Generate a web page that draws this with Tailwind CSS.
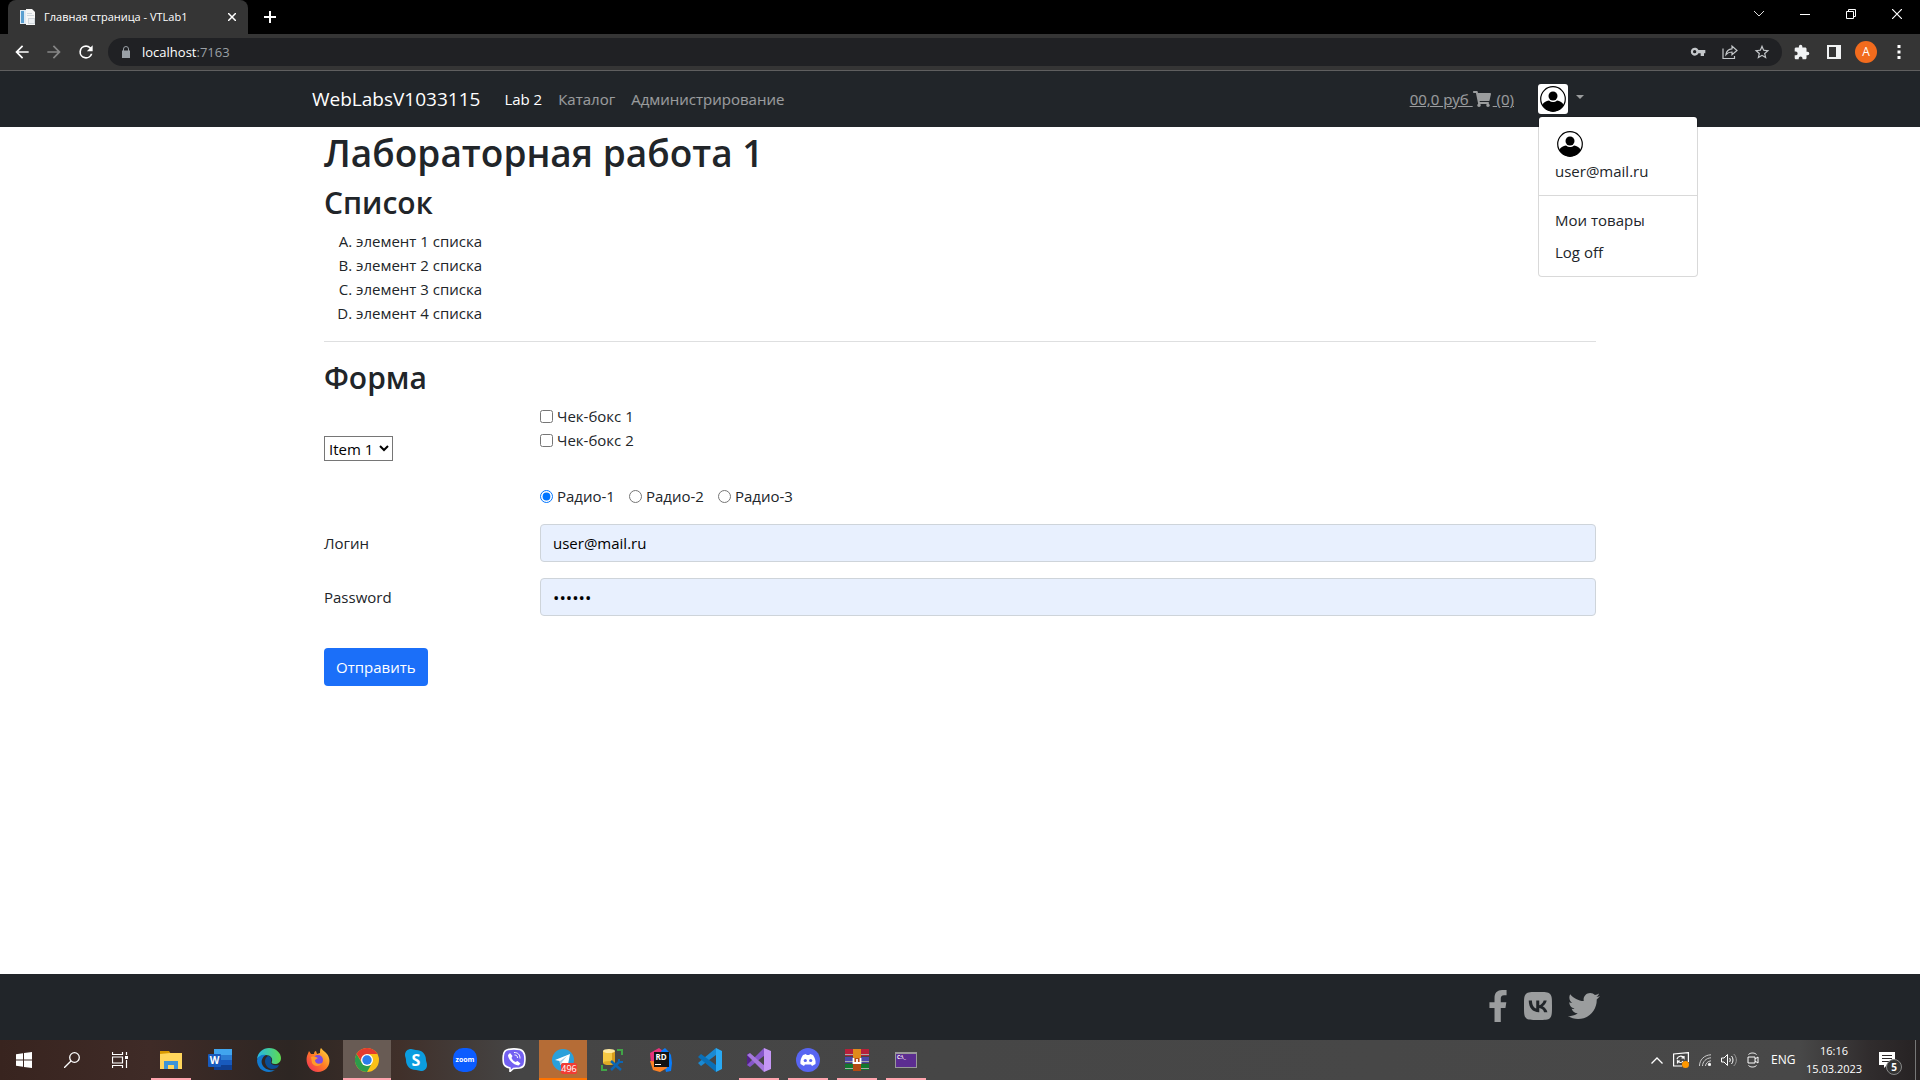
<!DOCTYPE html>
<html lang="ru">
<head>
<meta charset="utf-8">
<title>Главная страница - VTLab1</title>
<script src="https://cdn.jsdelivr.net/npm/@tailwindcss/browser@4"></script>
</head>
<body class="min-h-screen flex flex-col bg-white text-[#212529] font-['Open_Sans','Noto_Sans',sans-serif] text-[15px] leading-6">

<!-- Browser window -->
<header class="text-white">
  <div class="h-[34px] bg-black flex items-stretch">
    <div class="ml-2 w-60 bg-[#353535] rounded-t-lg flex items-center pl-3 pr-2 text-[11px]">
      <svg class="size-4 shrink-0" viewBox="0 0 16 16"><path fill="#dfe9f2" d="M0 1h10v14H0z"/><path fill="#5a9fd0" d="M1 2h3v12H1z"/><path fill="#f6f6f6" d="M6 0h6l3 3v13H6z"/><path fill="#cfd6dc" d="M7 4h5v1H7zM7 6h7v1H7zM8 9h7v6H8z"/><path fill="#eceff2" d="M9 10h5v4H9z"/></svg>
      <span class="ml-2 grow whitespace-nowrap">Главная страница - VTLab1</span>
      <button aria-label="Закрыть вкладку" class="size-4 flex items-center justify-center"><svg class="size-2" viewBox="0 0 8 8" stroke="#fff" stroke-width="1.5"><path d="M0 0l8 8M8 0L0 8"/></svg></button>
    </div>
    <button aria-label="Новая вкладка" class="ml-2 w-7 flex items-center justify-center"><svg class="size-3" viewBox="0 0 12 12" stroke="#fff" stroke-width="2"><path d="M6 0v12M0 6h12"/></svg></button>
    <div class="ml-auto flex h-7">
      <button aria-label="Поиск вкладок" class="w-[46px] flex items-center justify-center"><svg class="w-3 h-2" viewBox="0 0 12 8" fill="none" stroke="#ddd"><path d="M1 1l5 5 5-5"/></svg></button>
      <button aria-label="Свернуть" class="w-[46px] flex items-center justify-center"><svg class="size-[10px]" viewBox="0 0 10 10" stroke="#fff"><path d="M0 5.5h10"/></svg></button>
      <button aria-label="Восстановить" class="w-[46px] flex items-center justify-center"><svg class="size-[10px]" viewBox="0 0 10 10" fill="none" stroke="#fff"><path d="M.5 2.5h7v7h-7zM2.5 2V.5h7v7H8"/></svg></button>
      <button aria-label="Закрыть" class="w-[46px] flex items-center justify-center"><svg class="size-[10px]" viewBox="0 0 10 10" stroke="#fff" stroke-width="1.2"><path d="M0 0l10 10M10 0L0 10"/></svg></button>
    </div>
  </div>
  <div class="h-[37px] bg-[#353535] border-b border-[#5f5f5f] flex items-center pl-3 pr-[11px] gap-3">
    <button aria-label="Назад"><svg class="size-5" viewBox="0 0 24 24" fill="#fff"><path d="M20 11H7.83l5.59-5.59L12 4l-8 8 8 8 1.41-1.41L7.83 13H20z"/></svg></button>
    <button aria-label="Вперёд"><svg class="size-5" viewBox="0 0 24 24" fill="#868686"><path d="M4 11h12.17l-5.59-5.59L12 4l8 8-8 8-1.41-1.41L16.17 13H4z"/></svg></button>
    <button aria-label="Обновить"><svg class="size-5" viewBox="0 0 24 24" fill="#fff"><path d="M17.65 6.35A7.96 7.96 0 0 0 12 4a8 8 0 1 0 7.73 10h-2.08A6 6 0 1 1 12 6c1.66 0 3.14.69 4.22 1.78L13 11h7V4z"/></svg></button>
    <div class="grow h-7 rounded-full bg-[#202124] flex items-center pl-3 pr-2.5 text-[13px]">
      <svg class="size-3 shrink-0" viewBox="0 0 12 12" fill="#9aa0a6"><path d="M2 4.500h8V12H2z"/><path d="M3.500 5V3a2.500 2.500 0 0 1 5 0v2" fill="none" stroke="#9aa0a6"/></svg>
      <span class="ml-2.5">localhost<span class="text-[#9aa0a6]">:7163</span></span>
      <div class="ml-auto flex items-center gap-3">
        <button aria-label="Пароли" class="size-5 flex items-center justify-center"><svg class="size-4" viewBox="0 0 24 24" fill="#c4c7ca"><path d="M12.650 9A6 6 0 1 0 12.650 14H16v4h5v-4h2V9zM7 14a2.500 2.500 0 1 1 0-5 2.500 2.500 0 0 1 0 5z"/></svg></button>
        <button aria-label="Поделиться" class="size-5 flex items-center justify-center"><svg class="size-4" viewBox="0 0 16 16" fill="none" stroke="#c4c7ca" stroke-width="1.200"><path d="M1 4.500V14.500H12.500V12M4 10.500C4.500 7 6.500 5 10 4.800V2l5 4.500-5 4.300V8C7.500 8 5.500 8.800 4 10.500z"/></svg></button>
        <button aria-label="Добавить закладку" class="size-5 flex items-center justify-center"><svg class="size-4" viewBox="0 0 24 24" fill="#c4c7ca"><path d="M23 9.240l-7.910-.68L12 1.300 8.910 8.570 1 9.240l6 5.200-1.800 7.730L12 18.070l6.800 4.100L17 14.440zM12 16.050l-4.140 2.500 1.100-4.710-3.650-3.160 4.820-.42L12 5.820l1.880 4.450 4.820.42-3.650 3.160 1.100 4.710z"/></svg></button>
      </div>
    </div>
    <button aria-label="Расширения"><svg class="size-4" viewBox="1 0 23 23" fill="#f1f3f4"><path d="M20.500 11H19V7c0-1.100-.9-2-2-2h-4V3.500a2.500 2.500 0 0 0-5 0V5H4c-1.100 0-2 .9-2 2v3.800h1.500a2.700 2.700 0 0 1 0 5.400H2V20c0 1.100.9 2 2 2h3.800v-1.500a2.700 2.700 0 0 1 5.400 0V22H17c1.100 0 2-.9 2-2v-4h1.500a2.500 2.500 0 0 0 0-5z"/></svg></button>
    <button aria-label="Боковая панель" class="px-px ml-1"><svg class="size-[14px]" viewBox="0 0 14 14"><path fill="#f1f3f4" fill-rule="evenodd" d="M0 0h14v14H0zM2 2v10h7V2z"/></svg></button>
    <button aria-label="Профиль" class="size-[22px] ml-px rounded-full bg-[#f26b1d] text-xs flex items-center justify-center">A</button>
    <button aria-label="Меню" class="w-5 flex justify-center"><svg class="w-1 h-[14px]" viewBox="0 0 4 14" fill="#fff"><path d="M.5 0h3v3h-3zM.5 5.500h3v3h-3zM.5 11h3v3h-3z"/></svg></button>
  </div>
</header>

<!-- Site navigation -->
<nav class="bg-[#212529] h-14">
  <div class="max-w-[1320px] mx-auto px-3 h-full flex items-center text-white/55">
    <a href="#" class="text-white text-[19px] mr-6">WebLabsV1033115</a>
    <div class="flex gap-4">
      <a href="#" class="text-white">Lab 2</a>
      <a href="#">Каталог</a>
      <a href="#">Администрирование</a>
    </div>
    <a href="#" class="ml-auto underline">00,0 руб <svg class="inline w-[18px] h-4 mr-0.5 align-[-2px]" viewBox="0 0 576 512" fill="#9b9d9e"><path d="M528.120 301.319l47.273-208C578.806 78.301 567.391 64 551.990 64H159.208l-9.166-44.810C147.758 8.021 137.930 0 126.529 0H24C10.745 0 0 10.745 0 24v16c0 13.255 10.745 24 24 24h69.883l70.248 343.435C147.325 417.100 136 435.222 136 456c0 30.928 25.072 56 56 56s56-25.072 56-56c0-15.674-6.447-29.835-16.824-40h209.647C430.447 426.165 424 440.326 424 456c0 30.928 25.072 56 56 56s56-25.072 56-56c0-22.172-12.888-41.332-31.579-50.405l5.517-24.276c3.413-15.018-8.002-29.319-23.403-29.319H218.117l-6.545-32h293.145c11.206 0 20.920-7.754 23.403-18.681z"/></svg> (0)</a>
    <div class="relative ml-6 mr-6">
      <button aria-label="Меню пользователя" class="flex items-center gap-2">
        <svg class="size-[30px] rounded-[3px] bg-white" viewBox="0 0 30 30"><clipPath id="ring"><circle cx="15" cy="15" r="12.500"/></clipPath><circle cx="15" cy="15" r="12.300" fill="none" stroke="#000" stroke-width="1.200"/><g clip-path="url(#ring)"><path d="M4 28c-2-9 4-11 7-11.500 2.500 2 5.500 2 8 0 3 .5 9 2.500 7 11.500z"/></g><circle cx="15" cy="12" r="4.500"/></svg>
        <svg class="w-2 h-1 -translate-y-0.5" viewBox="0 0 8 4" fill="#9b9d9e"><path d="M0 0h8L4 4z"/></svg>
      </button>
      <div class="absolute left-0 top-8 z-10 w-40 bg-white border border-black/15 bg-clip-padding rounded py-2 text-[#212529]">
        <div class="px-4 py-1">
          <svg class="size-[30px]" viewBox="0 0 30 30"><circle cx="15" cy="15" r="12.300" fill="none" stroke="#000" stroke-width="1.200"/><g clip-path="url(#ring)"><path d="M4 28c-2-9 4-11 7-11.500 2.500 2 5.500 2 8 0 3 .5 9 2.500 7 11.500z"/></g><circle cx="15" cy="12" r="4.500"/></svg>
          user@mail.ru
        </div>
        <hr class="my-2 border-black/15">
        <a href="#" class="block px-4 py-1">Мои товары</a>
        <a href="#" class="block px-4 py-1">Log off</a>
      </div>
    </div>
  </div>
</nav>

<main class="grow w-full max-w-[1320px] mx-auto px-6">
  <h1 class="text-[37px] leading-[52px] font-semibold mb-1">Лабораторная работа 1</h1>
  <h2 class="text-[30px] leading-10 font-semibold mb-1.5">Список</h2>
  <ol class="list-[upper-alpha] pl-8 mb-4">
    <li>элемент 1 списка</li>
    <li>элемент 2 списка</li>
    <li>элемент 3 списка</li>
    <li>элемент 4 списка</li>
  </ol>
  <hr class="border-[#dedfe0] mb-4">
  <h2 class="text-[30px] leading-10 font-semibold mb-1.5">Форма</h2>
  <form>
    <div class="flex h-20 items-start">
      <div class="w-[216px] shrink-0 pt-8"><select aria-label="Элемент" class="border border-[#767676] bg-white rounded-none h-[25px] w-[69px] text-black"><option>Item 1</option></select></div>
      <div>
        <label class="flex items-center gap-1"><input type="checkbox">Чек-бокс 1</label>
        <label class="flex items-center gap-1"><input type="checkbox">Чек-бокс 2</label>
      </div>
    </div>
    <div class="flex gap-[14px] ml-[216px] mb-4">
      <label class="flex items-center gap-1"><input type="radio" name="radio" checked>Радио-1</label>
      <label class="flex items-center gap-1"><input type="radio" name="radio">Радио-2</label>
      <label class="flex items-center gap-1"><input type="radio" name="radio">Радио-3</label>
    </div>
    <div class="flex items-center mb-4">
      <label for="login" class="w-[216px] shrink-0">Логин</label>
      <input id="login" type="text" value="user@mail.ru" class="grow h-[38px] px-3 border border-[#ced4da] rounded bg-[#e8f0fe] text-black">
    </div>
    <div class="flex items-center mb-8">
      <label for="password" class="w-[216px] shrink-0">Password</label>
      <input id="password" type="password" value="123456" class="grow h-[38px] px-3 border border-[#ced4da] rounded bg-[#e8f0fe] text-black text-[17px]">
    </div>
    <button type="button" class="h-[38px] px-3 rounded bg-[#1b6ff9] text-white">Отправить</button>
  </form>
</main>

<footer class="bg-[#212529] h-[66px]">
  <div class="max-w-[1320px] mx-auto px-5 h-16 flex items-center justify-end gap-4">
    <a href="#" aria-label="Facebook"><svg class="w-5 h-8" viewBox="0 0 320 512" fill="#9b9d9e"><path d="M279.140 288l14.220-92.660h-88.910v-60.130c0-25.350 12.420-50.060 52.240-50.060h40.420V0S260.430 0 225.360 0c-73.220 0-121.080 44.380-121.080 124.720v70.620H22.890V288h81.390v224h100.170V288z"/></svg></a>
    <a href="#" aria-label="VK"><svg class="w-7 h-8" viewBox="0 0 448 512" fill="#9b9d9e"><path fill-rule="evenodd" d="M31.490 63.490C0 94.980 0 145.670 0 247.040V264.960C0 366.330 0 417.020 31.490 448.510C62.980 480 113.670 480 215.040 480H232.960C334.330 480 385.020 480 416.510 448.510C448 417.020 448 366.330 448 264.960V247.040C448 145.670 448 94.980 416.510 63.490C385.020 32 334.330 32 232.960 32H215.040C113.670 32 62.980 32 31.490 63.490ZM75.600 168.270H126.750C128.430 253.760 166.130 289.970 196 297.440V168.270H244.160V242C273.650 238.830 304.640 205.230 315.090 168.270H363.250C359.310 187.440 351.460 205.580 340.190 221.580C328.910 237.570 314.460 251.070 297.730 261.230C316.410 270.500 332.910 283.630 346.130 299.750C359.360 315.870 369.010 334.620 374.450 354.750H321.440C316.560 337.260 306.610 321.610 292.870 309.750C279.120 297.900 262.170 290.370 244.160 288.110V354.750H238.370C136.270 354.750 78.030 284.750 75.600 168.270Z"/></svg></a>
    <a href="#" aria-label="Twitter"><svg class="size-8" viewBox="0 0 512 512" fill="#9b9d9e"><path d="M459.370 151.716c.325 4.548.325 9.097.325 13.645 0 138.720-105.583 298.558-298.558 298.558-59.452 0-114.680-17.219-161.137-47.106 8.447.974 16.568 1.299 25.340 1.299 49.055 0 94.213-16.568 130.274-44.832-46.132-.975-84.792-31.188-98.112-72.772 6.498.974 12.995 1.624 19.818 1.624 9.421 0 18.843-1.300 27.614-3.573-48.081-9.747-84.143-51.980-84.143-102.985v-1.299c13.969 7.797 30.214 12.670 47.431 13.319-28.264-18.843-46.781-51.005-46.781-87.391 0-19.492 5.197-37.360 14.294-52.954 51.655 63.675 129.300 105.258 216.365 109.807-1.624-7.797-2.599-15.918-2.599-24.040 0-57.828 46.782-104.934 104.934-104.934 30.213 0 57.502 12.670 76.670 33.137 23.715-4.548 46.456-13.320 66.599-25.340-7.798 24.366-24.366 44.833-46.132 57.827 21.117-2.273 41.584-8.122 60.426-16.243-14.292 20.791-32.161 39.308-52.628 54.253z"/></svg></a>
  </div>
</footer>

<!-- Windows taskbar -->
<div class="h-10 flex items-stretch text-white text-xs bg-[linear-gradient(90deg,#38241f_0,#3f2b27_150px,#2d2623_290px,#40302a_400px,#454545_520px,#484848_1800px,#302c2d_1870px,#262223_1920px)]">
  <div class="flex mr-[3px]">
    <button aria-label="Пуск" class="w-12 flex items-center justify-center"><svg class="size-4" viewBox="0 0 16 16" fill="#fff"><path d="M0 2.200L7 1.200V7.500H0zM8 1L16 0v7.500H8zM0 8.500h7v6.300L0 13.800zM8 8.500h8V16L8 15z"/></svg></button>
    <button aria-label="Поиск" class="w-12 flex items-center justify-center"><svg class="size-4" viewBox="0 0 16 16" fill="none" stroke="#fff" stroke-width="1.300"><circle cx="10.500" cy="5.500" r="4.800"/><path d="M7 9l-7 7"/></svg></button>
    <button aria-label="Представление задач" class="w-12 flex items-center justify-center"><svg class="size-4" viewBox="0 0 16 16" fill="none" stroke="#fff" stroke-width="1.200"><path d="M.5 0v2.500h10V0M.5 5h10v6H.5zM.5 16v-2.500h10V16M14.500 0v3M14.500 8v8"/><path fill="#fff" stroke="none" d="M13 4h3v3h-3z"/></svg></button>
  </div>
  <div class="flex gap-px">
    <button aria-label="Проводник" class="relative w-12 flex items-center justify-center"><svg class="size-6" viewBox="0 0 24 24"><path fill="#d99a00" d="M1 3h9l2 3v3H1z"/><path fill="#ffd65c" d="M1 6l10-1h12v16H1z"/><path fill="#3d94d6" d="M5 13h14v8h-4v-4H9v4H5z"/></svg><span class="absolute inset-x-1 bottom-0 h-0.5 bg-[#ffa4ae]"></span></button>
    <button aria-label="Word" class="w-12 flex items-center justify-center"><svg class="size-6" viewBox="0 0 24 24"><path fill="#41a5ee" d="M6 1h18v6H6z"/><path fill="#2b7cd3" d="M6 7h18v5H6z"/><path fill="#185abd" d="M6 12h18v5H6z"/><path fill="#103f91" d="M6 17h18v5H6z"/><rect y="6" width="13" height="13" rx="1" fill="#185abd"/><text x="6.500" y="16" font-size="10" font-weight="bold" text-anchor="middle" fill="#fff">W</text></svg></button>
    <button aria-label="Edge" class="w-12 flex items-center justify-center"><svg class="size-6" viewBox="0 0 24 24"><defs><linearGradient id="eg" x1="0" x2="1"><stop stop-color="#25b8e8"/><stop offset="1" stop-color="#5fdc4f"/></linearGradient></defs><path fill="url(#eg)" d="M0 11C1 4 6 0 12 0c7 0 12 5 12 10 0 4-3 6-6 6-3 0-4-1-3-3 1-3-2-6-6-6-4 0-7 2-9 4z"/><path fill="#1279ce" d="M0 12c1-4 5-6 9-5-4 2-5 6-4 9 2 5 7 7 13 6-2 1-4 2-6 2C5 24 0 19 0 12z"/><path fill="#0b4d94" d="M8 13c0-3 2-5 4-5 2 1 3 3 2 5-1 3 2 5 8 4-1 3-4 4-7 4-4 0-7-4-7-8z"/></svg></button>
    <button aria-label="Firefox" class="w-12 flex items-center justify-center"><svg class="size-6" viewBox="0 0 24 24"><defs><linearGradient id="ff" x1="1" y1="0" x2="0" y2="1"><stop stop-color="#ffe23d"/><stop offset=".5" stop-color="#ff7a25"/><stop offset="1" stop-color="#f0255f"/></linearGradient></defs><path fill="url(#ff)" d="M1 8l2-5 2 3 3 0c0-2 1-3 2-3l1 3 3-1c0-2 0-4 1-5 2 3 7 5 8 10 2 7-3 14-11 14S-1 16 1 8z"/><circle cx="12" cy="12" r="5" fill="#7c4be0"/><path fill="#ff9a2a" d="M5 9c3-1 5 0 7 1l-3 2c0 3 3 5 7 3-2 4-8 4-10 0z"/></svg></button>
    <button aria-label="Chrome" class="relative w-12 bg-[#685b54] flex items-center justify-center"><svg class="size-6" viewBox="0 0 24 24"><circle cx="12" cy="12" r="12" fill="#fbc116"/><path fill="#2c9c4b" d="M12 24A12 12 0 0 1 1.600 6L7 15l5 3 4-1z"/><path fill="#e33b2e" d="M1.600 6a12 12 0 0 1 20.800 0H12L7 14z"/><circle cx="12" cy="12" r="6" fill="#fff"/><circle cx="12" cy="12" r="4.700" fill="#2a7de9"/></svg><span class="absolute inset-x-0 bottom-0 h-0.5 bg-[#ffa4ae]"></span></button>
    <button aria-label="Skype" class="w-12 flex items-center justify-center"><svg class="size-6" viewBox="0 0 24 24"><path fill="#0b9de0" d="M7 1c2 0 3 1 5 1 6 0 10 4 10 10 0 1 1 3 1 5 0 4-3 6-6 6-2 0-3-1-5-1C6 22 2 18 2 12 2 10 1 9 1 7c0-4 3-6 6-6z"/><text x="12" y="18" font-size="16" font-weight="bold" text-anchor="middle" fill="#fff">S</text></svg></button>
    <button aria-label="Zoom" class="w-12 flex items-center justify-center"><svg class="size-6" viewBox="0 0 24 24"><rect width="24" height="24" rx="10" fill="#0b5cff"/><text x="12" y="14" font-size="7" font-weight="bold" text-anchor="middle" fill="#fff">zoom</text></svg></button>
    <button aria-label="Viber" class="w-12 flex items-center justify-center"><svg class="size-6" viewBox="0 0 24 24"><path fill="#7360f2" stroke="#fff" stroke-width="1.600" d="M6 1.500c4-.8 8-.8 12 0 3 1 4 3 4.500 5 .6 3 .6 6 0 9-.5 3-2 4-5 4.500l-6 .5-3.500 3v-3.500c-4-1-6-2-6.500-5-.5-3-.5-6 0-8.500.5-3 2-4.500 4.500-5z"/><path fill="#fff" d="M8 5l2.500 3-1 2c1 2 2 3 4 4l2-1 3 2.500-2 2C11 17 6 11 6 7z"/><path fill="none" stroke="#fff" d="M12 4.500c4 0 6 2 6 6M12.500 7c2 0 3 1 3 3"/></svg></button>
    <button aria-label="Telegram" class="relative w-12 bg-[#b56c36] flex items-center justify-center"><svg class="size-6" viewBox="0 0 24 24"><circle cx="12" cy="12" r="11" fill="#2ba0da"/><path fill="#fff" d="M4 12l15-6-2.500 13-5-4-2 2-1-4z"/><path fill="#a9cfe6" d="M8.500 13.500L16 8l-5 6-1.500 3z"/></svg><span class="absolute left-[22px] top-[23px] h-[11px] w-4 rounded-xs bg-[#f23c34] text-[9px] leading-[11px] flex justify-center">496</span><span class="absolute inset-x-0 bottom-0 h-0.5 bg-[#ff7300]"></span></button>
    <button aria-label="SQL Server Management Studio" class="w-12 flex items-center justify-center"><svg class="size-6" viewBox="0 0 24 24"><path fill="#f6c944" d="M3 3h12v12H3z"/><path fill="#d99e1c" d="M12 3h3v12h-3z"/><ellipse cx="9" cy="3" rx="6" ry="2" fill="#ffe9a0"/><ellipse cx="9" cy="15" rx="6" ry="2" fill="#e0aa25"/><path fill="none" stroke="#41a447" stroke-width="2" d="M17 2h5v5M2 17v5h5"/><path stroke="#0b66b5" stroke-width="2.500" d="M11 22l9-9M11 13l10 9"/><path fill="none" stroke="#0b66b5" stroke-width="2" d="M19 11v3h4"/></svg></button>
    <button aria-label="Rider" class="w-12 flex items-center justify-center"><svg class="size-6" viewBox="0 0 24 24"><path fill="#e7317a" d="M1 5l9-5 4 3-2 14-10-2z"/><path fill="#087cfa" d="M12 3l4-3 3 3 3 4 1 8-1 8-5 1z"/><path fill="#fd8224" d="M1 13l3 9 7 2 7-4-2-6z"/><path fill="#111" d="M5 4h15v15H5z"/><text x="12" y="12" font-size="8" font-weight="bold" text-anchor="middle" fill="#fff">RD</text><path fill="#fff" d="M6 16h6v1H6z"/></svg></button>
    <button aria-label="Visual Studio Code" class="w-12 flex items-center justify-center"><svg class="size-6" viewBox="0 0 24 24"><path fill="#29a9f3" d="M18 0l6 3v18l-6 3z"/><path fill="#1a8ad3" d="M18 0v7L3 18l-3-3z"/><path fill="#0a70b8" d="M0 9l3-3 15 11v7z"/></svg></button>
    <button aria-label="Visual Studio" class="relative w-12 flex items-center justify-center"><svg class="size-6" viewBox="0 0 24 24"><path fill="#52218a" d="M0 6l3-1v14l-3-2z"/><path fill="#8556c9" d="M0 17L17 0l1 7L3 19z"/><path fill="#a578dc" d="M0 7l3-2 15 13-1 6z"/><path fill="#c597f5" d="M17 0l7 3v18l-7 3z"/></svg><span class="absolute inset-x-1 bottom-0 h-0.5 bg-[#ffa4ae]"></span></button>
    <button aria-label="Discord" class="relative w-12 flex items-center justify-center"><svg class="size-6" viewBox="0 0 24 24"><circle cx="12" cy="12" r="12" fill="#5865f2"/><path fill="#fff" d="M7 7l3-1 .7 1h2.600L14 6l3 1c2 3 3 6 2.500 9L16 18l-1-1.500H9L8 18l-3.500-2C4 13 5 10 7 7z"/><circle cx="9.300" cy="12.500" r="1.600" fill="#5865f2"/><circle cx="14.700" cy="12.500" r="1.600" fill="#5865f2"/></svg><span class="absolute inset-x-1 bottom-0 h-0.5 bg-[#ffa4ae]"></span></button>
    <button aria-label="WinRAR" class="relative w-12 flex items-center justify-center"><svg class="size-6" viewBox="0 0 24 24"><path fill="#b5203a" d="M0 1h24v7H0z"/><path fill="#4a48a8" d="M0 9h24v6H0z"/><path fill="#12782f" d="M0 16h24v6H0z"/><path fill="#aaa" d="M0 6h24v1H0zM0 13h24v1H0zM0 20h24v1H0z"/><path fill="#e08a1c" d="M8 1h8v9H8z"/><path fill="#b34a12" d="M8 10h8v13H8z"/><path fill="none" stroke="#fff" stroke-width="1.800" d="M8.500 10v5h7v-5M12 11v4"/></svg><span class="absolute inset-x-1 bottom-0 h-0.5 bg-[#ffa4ae]"></span></button>
    <button aria-label="Командная строка" class="relative w-12 flex items-center justify-center"><svg class="size-6" viewBox="0 0 24 24"><path fill="#999" d="M1 4h22v16H1z"/><path fill="#5c2d91" d="M2 6h20v13H2z"/><text x="3" y="11" font-size="5" font-weight="bold" fill="#fff">C:\_</text></svg><span class="absolute inset-x-1 bottom-0 h-0.5 bg-[#ffa4ae]"></span></button>
  </div>
  <div class="ml-auto flex items-center">
    <button aria-label="Скрытые значки" class="w-6 flex justify-center"><svg class="w-3 h-[7px]" viewBox="0 0 12 7" fill="none" stroke="#fff" stroke-width="1.300"><path d="M.5 6.500L6 1l5.500 5.500"/></svg></button>
    <button aria-label="Обновления" class="w-6 flex justify-center"><svg class="size-4" viewBox="0 0 16 16" fill="none" stroke="#fff" stroke-width="1.200"><path d="M9 14H.6V2L15.400.6V10M4 7c1-3 5-4 7-1V4M11 6H8.500M10 9c-1 2-4 2-5.500 0v2.500M4.500 9H7"/><circle cx="12.500" cy="12.500" r="3.500" fill="#ff9800" stroke="none"/></svg></button>
    <button aria-label="Сеть" class="w-6 flex justify-center"><svg class="size-3" viewBox="0 0 12 12" fill="none" stroke="#fff"><path stroke="#ccc" d="M.5 12C.5 6 5 1 12 .8M3.500 12C3.500 8 7 4 12 3.800M6.500 12c0-2.500 2.500-5 5.500-5.200"/><circle cx="10.500" cy="10.500" r="1.200" fill="#fff"/></svg></button>
    <button aria-label="Громкость" class="w-6 flex justify-center"><svg class="w-4 h-[14px]" viewBox="0 0 16 14" fill="none" stroke="#fff"><path d="M.5 5h2.500L6.500 1.500v11L3 9H.5zM8.500 5c1 1 1 3 0 4M10.500 3c2 2 2 6 0 8"/><path stroke="#999" d="M12.700 1c3.500 3 3.500 9 0 12"/></svg></button>
    <button aria-label="Собрание" class="w-6 flex justify-center"><svg class="w-3 h-4" viewBox="0 0 12 16" fill="none" stroke="#fff"><path d="M1 5h7v6H1zM8 7l3-2v6L8 9M1.500 2.500c2-2 6-2 8 0M1.500 13.500c2 2 6 2 8 0"/></svg></button>
    <span class="ml-1.5 w-[26px]">ENG</span>
    <div class="w-[74px] text-center text-[11px] leading-[18px]">16:16<br>15.03.2023</div>
    <button aria-label="Уведомления" class="relative w-10 h-full"><svg class="absolute left-2 top-3 size-4" viewBox="0 0 16 16" fill="#fff"><path fill-rule="evenodd" d="M0 0h16v13H8l-3 3v-3H0zM3 3v1h10V3zM3 6v1h10V6zM3 9v1h7V9z"/></svg><span class="absolute left-[15px] top-[19px] size-4 rounded-full border border-[#888] bg-[#333] text-[10px] leading-[14px] font-bold text-center">5</span></button>
    <span class="ml-1 mr-1 h-full w-px bg-[#777]"></span>
  </div>
</div>
</body>
</html>
